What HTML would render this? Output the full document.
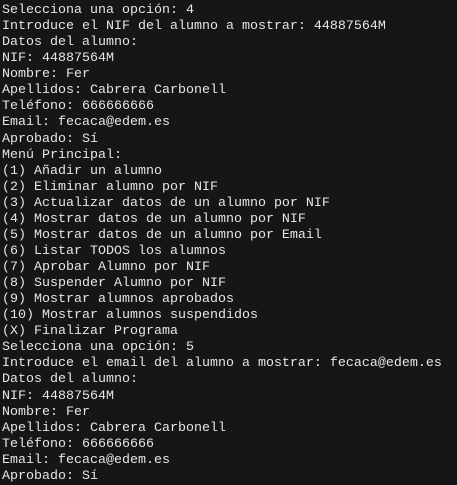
<!DOCTYPE html>
<html><head><meta charset="utf-8"><style>
html,body{margin:0;padding:0;background:#161616;width:457px;height:485px;overflow:hidden}
pre{margin:0;padding:0 0 0 2px;position:relative;top:3px;font-family:"Liberation Mono",monospace;font-size:13.33px;line-height:16.07px;color:#e6e6e6;white-space:pre}
</style></head><body><pre>Selecciona una opción: 4
Introduce el NIF del alumno a mostrar: 44887564M
Datos del alumno:
NIF: 44887564M
Nombre: Fer
Apellidos: Cabrera Carbonell
Teléfono: 666666666
Email: fecaca@edem.es
Aprobado: Sí
Menú Principal:
(1) Añadir un alumno
(2) Eliminar alumno por NIF
(3) Actualizar datos de un alumno por NIF
(4) Mostrar datos de un alumno por NIF
(5) Mostrar datos de un alumno por Email
(6) Listar TODOS los alumnos
(7) Aprobar Alumno por NIF
(8) Suspender Alumno por NIF
(9) Mostrar alumnos aprobados
(10) Mostrar alumnos suspendidos
(X) Finalizar Programa
Selecciona una opción: 5
Introduce el email del alumno a mostrar: fecaca@edem.es
Datos del alumno:
NIF: 44887564M
Nombre: Fer
Apellidos: Cabrera Carbonell
Teléfono: 666666666
Email: fecaca@edem.es
Aprobado: Sí
Menú Principal:</pre></body></html>
